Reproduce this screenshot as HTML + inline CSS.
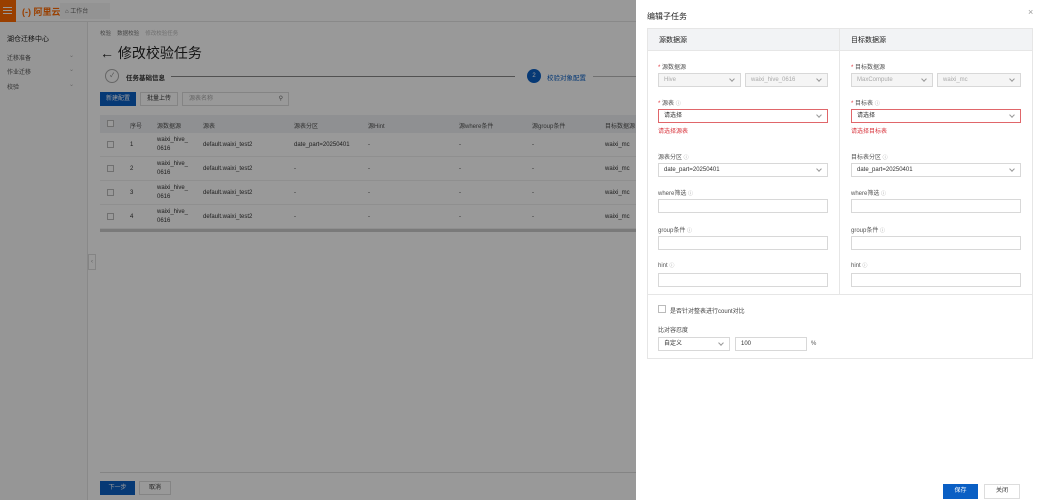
<!DOCTYPE html><html><head><meta charset="utf-8"><style>
*{box-sizing:border-box;margin:0;padding:0}
body{width:1042px;height:500px;position:relative;overflow:hidden;font-family:"Liberation Sans","Noto Sans CJK SC",sans-serif;font-size:6px;color:#333;background:#fff}
.a{position:absolute;white-space:nowrap}
.ov{position:absolute;left:0;top:0;width:636px;height:500px;background:rgba(0,0,0,.4)}
.sel{position:absolute;height:14px;border:1px solid #d8d8d8;background:#fff;padding-left:5px;line-height:12px;font-size:6px;color:#333}
.sel.dis{background:#f5f5f5;color:#aaa}
.sel.err{border-color:#e0666a}
.sel.ch:after{content:"";position:absolute;right:6px;top:3px;width:3px;height:3px;border-right:1px solid #999;border-bottom:1px solid #999;transform:rotate(45deg)}
.lb{position:absolute;font-size:6px;color:#555}
.lb i{font-style:normal;color:#999;font-size:5px}
.req:before{content:"* ";color:#e0333a}
.row{position:absolute;left:100px;width:536px;height:24px;border-bottom:1px solid #eee;background:#fff}
.cb{position:absolute;width:7px;height:7px;border:1px solid #bbb;background:#fff}
</style></head><body>
<!-- main page -->
<div class="a" style="left:0;top:0;width:1042px;height:22px;background:#fff;border-bottom:1px solid #e5e5e5"></div>
<div class="a" style="left:0;top:0;width:16px;height:22px;background:#ff6a00"></div>
<div class="a" style="left:3px;top:7px;width:9px;height:1px;background:#fff;box-shadow:0 3px #fff,0 6px #fff"></div>
<div class="a" style="left:22px;top:5px;font-size:9px;color:#ff6a00;font-weight:bold">(-) 阿里云</div>
<div class="a" style="left:60px;top:3px;width:50px;height:16px;background:#f5f5f5"></div>
<div class="a" style="left:65px;top:6px;font-size:6px;color:#666">⌂ 工作台</div>
<div class="a" style="left:0;top:22px;width:88px;height:478px;background:#fafafa;border-right:1px solid #e5e5e5"></div>
<div class="a" style="left:7px;top:34px;font-size:7px;color:#222">湖仓迁移中心</div>
<div class="a" style="left:7px;top:53px;color:#555">迁移准备</div><div class="a" style="left:69px;top:52px;color:#aaa">⌄</div>
<div class="a" style="left:7px;top:67px;color:#555">作业迁移</div><div class="a" style="left:69px;top:66px;color:#aaa">⌄</div>
<div class="a" style="left:7px;top:82px;color:#555">校验</div><div class="a" style="left:69px;top:81px;color:#aaa">⌄</div>
<div class="a" style="left:88px;top:254px;width:8px;height:16px;background:#fff;border:1px solid #ddd;font-size:6px;color:#999;text-align:center;line-height:14px">‹</div>
<div class="a" style="left:100px;top:29px;color:#777;font-size:5.5px">校验 &nbsp;&nbsp; 数据校验 &nbsp;&nbsp; <span style="color:#bbb">修改校验任务</span></div>
<div class="a" style="left:100px;top:43px;font-size:14px;color:#222">← 修改校验任务</div>
<div class="a" style="left:105px;top:69px;width:14px;height:14px;border:1px solid #aaa;border-radius:50%;text-align:center;line-height:12px;color:#777;font-size:6px">✓</div>
<div class="a" style="left:126px;top:72px;font-size:6.5px;font-weight:bold;color:#333">任务基础信息</div>
<div class="a" style="left:171px;top:76px;width:344px;height:1px;background:#888"></div>
<div class="a" style="left:527px;top:69px;width:14px;height:14px;background:#0a5fc4;border-radius:50%;text-align:center;line-height:14px;color:#fff;font-size:6px">2</div>
<div class="a" style="left:547px;top:72px;font-size:6.5px;color:#0a5fc4">校验对象配置</div>
<div class="a" style="left:593px;top:76px;width:43px;height:1px;background:#bbb"></div>
<div class="a" style="left:100px;top:92px;width:36px;height:14px;background:#0a5fc4;color:#fff;text-align:center;line-height:14px">新建配置</div>
<div class="a" style="left:140px;top:92px;width:38px;height:14px;background:#fff;border:1px solid #ddd;text-align:center;line-height:12px;color:#333">批量上传</div>
<div class="a" style="left:182px;top:92px;width:107px;height:14px;background:#fff;border:1px solid #ddd;padding-left:6px;line-height:12px;color:#aaa">源表名称<span style="position:absolute;right:5px;color:#666">⚲</span></div>
<div class="a" style="left:100px;top:115px;width:536px;height:18px;background:#eef0f3"></div>
<div class="cb" style="left:107px;top:120px"></div>
<div class="a" style="left:130px;top:121px;color:#555">序号</div><div class="a" style="left:157px;top:121px;color:#555">源数据源</div><div class="a" style="left:203px;top:121px;color:#555">源表</div><div class="a" style="left:294px;top:121px;color:#555">源表分区</div><div class="a" style="left:368px;top:121px;color:#555">源Hint</div><div class="a" style="left:459px;top:121px;color:#555">源where条件</div><div class="a" style="left:532px;top:121px;color:#555">源group条件</div><div class="a" style="left:605px;top:121px;color:#555">目标数据源</div>
<div class="row" style="top:133px"></div><div class="row" style="top:157px"></div><div class="row" style="top:181px"></div><div class="row" style="top:205px"></div>
<div class="cb" style="left:107px;top:141px"></div><div class="a" style="left:130px;top:142px">1</div><div class="a" style="left:157px;top:136px;line-height:9px">waixi_hive_<br>0616</div><div class="a" style="left:203px;top:142px">default.waixi_test2</div><div class="a" style="left:294px;top:142px">date_part=20250401</div><div class="a" style="left:368px;top:142px">-</div><div class="a" style="left:459px;top:142px">-</div><div class="a" style="left:532px;top:142px">-</div><div class="a" style="left:605px;top:142px">waixi_mc</div>
<div class="cb" style="left:107px;top:165px"></div><div class="a" style="left:130px;top:166px">2</div><div class="a" style="left:157px;top:160px;line-height:9px">waixi_hive_<br>0616</div><div class="a" style="left:203px;top:166px">default.waixi_test2</div><div class="a" style="left:294px;top:166px">-</div><div class="a" style="left:368px;top:166px">-</div><div class="a" style="left:459px;top:166px">-</div><div class="a" style="left:532px;top:166px">-</div><div class="a" style="left:605px;top:166px">waixi_mc</div>
<div class="cb" style="left:107px;top:189px"></div><div class="a" style="left:130px;top:190px">3</div><div class="a" style="left:157px;top:184px;line-height:9px">waixi_hive_<br>0616</div><div class="a" style="left:203px;top:190px">default.waixi_test2</div><div class="a" style="left:294px;top:190px">-</div><div class="a" style="left:368px;top:190px">-</div><div class="a" style="left:459px;top:190px">-</div><div class="a" style="left:532px;top:190px">-</div><div class="a" style="left:605px;top:190px">waixi_mc</div>
<div class="cb" style="left:107px;top:213px"></div><div class="a" style="left:130px;top:214px">4</div><div class="a" style="left:157px;top:208px;line-height:9px">waixi_hive_<br>0616</div><div class="a" style="left:203px;top:214px">default.waixi_test2</div><div class="a" style="left:294px;top:214px">-</div><div class="a" style="left:368px;top:214px">-</div><div class="a" style="left:459px;top:214px">-</div><div class="a" style="left:532px;top:214px">-</div><div class="a" style="left:605px;top:214px">waixi_mc</div>
<div class="a" style="left:100px;top:229px;width:536px;height:3px;background:#ccc"></div>
<div class="a" style="left:100px;top:472px;width:536px;height:1px;background:#ddd"></div>
<div class="a" style="left:100px;top:481px;width:35px;height:14px;background:#0a5fc4;color:#fff;text-align:center;line-height:14px">下一步</div>
<div class="a" style="left:139px;top:481px;width:32px;height:14px;background:#fff;border:1px solid #ddd;text-align:center;line-height:12px">取消</div>
<div class="ov"></div>
<!-- drawer -->
<div class="a" style="left:636px;top:0;width:406px;height:500px;background:#fff"></div>
<div class="a" style="left:647px;top:11px;font-size:8px;color:#222">编辑子任务</div>
<div class="a" style="left:1028px;top:7px;font-size:9px;color:#999">×</div>
<div class="a" style="left:647px;top:28px;width:386px;height:331px;border:1px solid #e6e6e6"></div>
<div class="a" style="left:648px;top:29px;width:384px;height:22px;background:#f2f3f5;border-bottom:1px solid #e6e6e6"></div>
<div class="a" style="left:839px;top:29px;width:1px;height:266px;background:#e6e6e6"></div>
<div class="a" style="left:648px;top:294px;width:384px;height:1px;background:#e6e6e6"></div>
<div class="a" style="left:659px;top:35px;font-size:7px;color:#222">源数据源</div>
<div class="a" style="left:851px;top:35px;font-size:7px;color:#222">目标数据源</div>
<div class="lb req" style="left:658px;top:62px">源数据源</div>
<div class="sel dis ch" style="left:658px;top:73px;width:83px">Hive</div>
<div class="sel dis ch" style="left:745px;top:73px;width:83px">waixi_hive_0616</div>
<div class="lb req" style="left:851px;top:62px">目标数据源</div>
<div class="sel dis ch" style="left:851px;top:73px;width:82px">MaxCompute</div>
<div class="sel dis ch" style="left:937px;top:73px;width:84px">waixi_mc</div>
<div class="lb req" style="left:658px;top:98px">源表 <i>ⓘ</i></div>
<div class="sel err ch" style="left:658px;top:109px;width:170px">请选择</div>
<div class="lb" style="left:658px;top:126px;color:#d9363e">请选择源表</div>
<div class="lb req" style="left:851px;top:98px">目标表 <i>ⓘ</i></div>
<div class="sel err ch" style="left:851px;top:109px;width:170px">请选择</div>
<div class="lb" style="left:851px;top:126px;color:#d9363e">请选择目标表</div>
<div class="lb" style="left:658px;top:152px">源表分区 <i>ⓘ</i></div>
<div class="sel ch" style="left:658px;top:163px;width:170px">date_part=20250401</div>
<div class="lb" style="left:851px;top:152px">目标表分区 <i>ⓘ</i></div>
<div class="sel ch" style="left:851px;top:163px;width:170px">date_part=20250401</div>
<div class="lb" style="left:658px;top:188px">where筛选 <i>ⓘ</i></div><div class="sel" style="left:658px;top:199px;width:170px"></div>
<div class="lb" style="left:851px;top:188px">where筛选 <i>ⓘ</i></div><div class="sel" style="left:851px;top:199px;width:170px"></div>
<div class="lb" style="left:658px;top:225px">group条件 <i>ⓘ</i></div><div class="sel" style="left:658px;top:236px;width:170px"></div>
<div class="lb" style="left:851px;top:225px">group条件 <i>ⓘ</i></div><div class="sel" style="left:851px;top:236px;width:170px"></div>
<div class="lb" style="left:658px;top:262px">hint <i>ⓘ</i></div><div class="sel" style="left:658px;top:273px;width:170px"></div>
<div class="lb" style="left:851px;top:262px">hint <i>ⓘ</i></div><div class="sel" style="left:851px;top:273px;width:170px"></div>
<div class="cb" style="left:658px;top:305px;width:8px;height:8px"></div>
<div class="lb" style="left:670px;top:306px;color:#444">是否针对整表进行count对比</div>
<div class="lb" style="left:658px;top:325px;color:#444">比对容忍度</div>
<div class="sel ch" style="left:658px;top:337px;width:72px">自定义</div>
<div class="sel" style="left:735px;top:337px;width:72px">100</div>
<div class="lb" style="left:811px;top:341px">%</div>
<div class="a" style="left:943px;top:484px;width:35px;height:15px;background:#0a5fc4;color:#fff;text-align:center;line-height:15px">保存</div>
<div class="a" style="left:984px;top:484px;width:36px;height:15px;background:#fff;border:1px solid #ddd;text-align:center;line-height:13px">关闭</div>
</body></html>
